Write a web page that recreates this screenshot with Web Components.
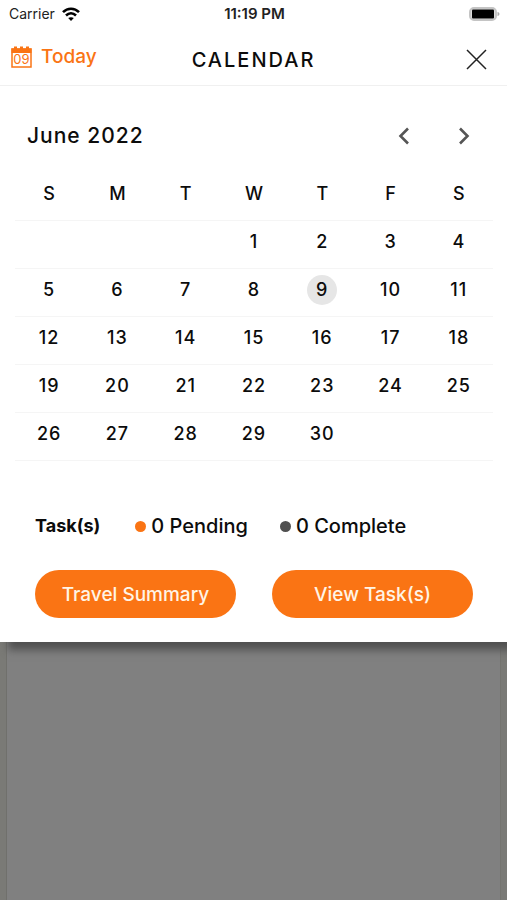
<!DOCTYPE html>
<html lang="en">
<head>
<meta charset="utf-8">
<meta name="viewport" content="width=device-width, initial-scale=1">
<title>Calendar</title>
<style>
  html, body { margin: 0; min-height: 100%; }
  body {
    --accent: #fa7414;
    --ink: #0c0c0c;
    --rule: #f5f5f5;
    font-family: Inter, "Liberation Sans", sans-serif;
    font-size: 19px;
    color: var(--ink);
    background: #808080;
  }
</style>
</head>
<body>
<calendar-app></calendar-app>
<script>
const define = (name, html, setup) => {
  const template = document.createElement('template');
  template.innerHTML = html;
  customElements.define(name, class extends HTMLElement {
    constructor() {
      super();
      this.attachShadow({ mode: 'open' }).append(template.content.cloneNode(true));
    }
    connectedCallback() {
      if (setup) setup(this, this.shadowRoot);
    }
  });
};

define('status-bar', `
  <style>
    :host { display: grid; grid-template-columns: 1fr auto 1fr; align-items: center; height: 28px; padding: 0 7px 0 9px; font: 400 14px/20px Inter, sans-serif; }
    .carrier { display: flex; align-items: center; gap: 7px; color: #222; }
    .time { font-size: 15px; font-weight: 600; color: #222; }
    .battery { justify-self: end; }
    svg { display: block; }
  </style>
  <span class="carrier"><span>Carrier</span>
    <svg width="18" height="14" viewBox="0 0 18 14" fill="none" stroke="#000" stroke-width="2.6" aria-hidden="true">
      <path d="M1 5.2C5.5 .6 12.5 .6 17 5.2"/><path d="M4 8.5c3-2.9 7-2.9 10 0"/><path d="M9 14 6.2 11.1c1.6-1.3 4-1.3 5.6 0z" fill="#000" stroke="none"/>
    </svg>
  </span>
  <span class="time">11:19 PM</span>
  <svg class="battery" width="31" height="15" viewBox="0 0 31 15" aria-hidden="true">
    <rect x="1" y="1" width="26" height="12" rx="4" fill="#ddd" stroke="#c4c4c4" stroke-width="2"/>
    <rect x="3" y="2.500" width="22" height="9" rx="1" fill="#000"/>
    <path d="M28.500 5c2.600.6 2.600 3.400 0 4z" fill="#aaa"/>
  </svg>
`);

define('sheet-header', `
  <style>
    :host { display: grid; grid-template-columns: 1fr auto 1fr; align-items: center; height: 57px; padding: 0 10px; border-bottom: 1px solid #f0f0f0; }
    button { display: flex; align-items: center; border: 0; padding: 0; background: none; font: inherit; cursor: pointer; }
    .today { gap: 8px; color: var(--accent); font-weight: 500; line-height: 24px; justify-self: start; }
    h1 { margin: 6px 0 0; font-size: 20px; line-height: 24px; font-weight: 500; letter-spacing: 2px; }
    .close { justify-self: end; margin: 6px 10px 0 0; }
  </style>
  <button class="today" type="button">
    <svg width="23" height="24" viewBox="0 0 23 24" aria-hidden="true">
      <rect x="2" y="4" width="19" height="18" fill="#fff" stroke="#fa7414" stroke-width="1.5"/>
      <path d="M1.5 3.5h20V8h-20zM4 1.5h3v3H4zM10 1.5h3v3h-3zM16 1.5h3v3h-3z" fill="#fa7414"/>
      <text x="11.5" y="19" text-anchor="middle" font-size="13" font-weight="400" font-family="Inter, sans-serif" fill="#fa7414">09</text>
    </svg>
    <span>Today</span>
  </button>
  <h1><slot></slot></h1>
  <button class="close" type="button" aria-label="Close">
    <svg width="21" height="21" viewBox="0 0 21 21" fill="none" stroke="#222" stroke-width="1.5" aria-hidden="true"><path d="M1 1l19 19M20 1 1 20"/></svg>
  </button>
`);

define('month-nav', `
  <style>
    :host { display: flex; align-items: center; justify-content: space-between; height: 32px; padding: 34px 31px 21px 27px; }
    h2 { margin: 0; font-size: 21px; line-height: 32px; font-weight: 500; letter-spacing: 1px; }
    nav { display: flex; gap: 36px; }
    button { display: grid; place-items: center; width: 24px; height: 32px; border: 0; padding: 0; background: none; cursor: pointer; }
  </style>
  <h2><slot></slot></h2>
  <nav aria-label="Month">
    <button type="button" aria-label="Previous month"><svg width="12" height="18" viewBox="0 0 12 18" fill="none" stroke="#555" stroke-width="2.6"><path d="M10 1.5 2.5 9l7.5 7.5"/></svg></button>
    <button type="button" aria-label="Next month"><svg width="12" height="18" viewBox="0 0 12 18" fill="none" stroke="#555" stroke-width="2.6"><path d="M2 1.5 9.5 9 2 16.5"/></svg></button>
  </nav>
`);

define('month-grid', `
  <style>
    :host { display: block; padding: 0 14px 0 15px; }
    table { width: 100%; table-layout: fixed; border-collapse: collapse; }
    th, td { padding: 6px 0 11px; border-bottom: 1px solid var(--rule); font-size: 18px; line-height: 30px; font-weight: 500; text-align: center; }
    td { letter-spacing: 1px; }
    button { display: block; min-width: 30px; height: 30px; margin: 0 auto; border: 0; border-radius: 15px; padding: 0; background: none; color: inherit; font: inherit; letter-spacing: inherit; cursor: pointer; }
    button[aria-current] { background: #e6e6e6; }
  </style>
  <table><thead><tr></tr></thead><tbody></tbody></table>
`, (host, root) => {
  const head = root.querySelector('thead tr');
  const body = root.querySelector('tbody');
  if (body.rows.length) return;
  for (const name of 'SMTWTFS') {
    const th = document.createElement('th');
    th.scope = 'col';
    th.textContent = name;
    head.append(th);
  }
  const start = Number(host.getAttribute('start'));
  const days = Number(host.getAttribute('days'));
  const today = Number(host.getAttribute('today'));
  for (let first = 1 - start; first <= days; first += 7) {
    const row = body.insertRow();
    for (let day = first; day < first + 7; day++) {
      const cell = row.insertCell();
      if (day < 1 || day > days) continue;
      const button = document.createElement('button');
      button.type = 'button';
      button.textContent = day;
      if (day === today) button.setAttribute('aria-current', 'date');
      cell.append(button);
    }
  }
});

define('task-count', `
  <style>
    :host { display: flex; align-items: center; gap: 5px; }
    i { width: 11px; height: 11px; border-radius: 50%; background: var(--dot); }
  </style>
  <i></i><span><slot></slot></span>
`);

define('task-summary', `
  <style>
    :host { display: flex; align-items: center; padding: 52px 34px 0 35px; line-height: 26px; font-weight: 500; }
    strong { font-weight: 700; font-size: 18px; margin-right: 35px; }
    .counts { display: flex; gap: 32px; font-size: 20px; }
    .pending { --dot: var(--accent); }
    .complete { --dot: #505050; }
  </style>
  <strong>Task(s)</strong>
  <div class="counts">
    <task-count class="pending">0 Pending</task-count>
    <task-count class="complete">0 Complete</task-count>
  </div>
`);

define('pill-button', `
  <style>
    :host { display: block; flex: 1; }
    button { display: block; width: 100%; height: 48px; border: 0; border-radius: 24px; padding: 0; background: var(--accent); color: #fff4e6; font: inherit; font-weight: 500; cursor: pointer; }
  </style>
  <button type="button"><slot></slot></button>
`);

define('calendar-app', `
  <style>
    :host { display: flex; flex-direction: column; min-height: 100vh; }
    main { background: #fff; z-index: 1; box-shadow: 8px 8px 8px #505050; }
    .actions { display: flex; gap: 36px; padding: 31px 34px 24px 35px; }
    .page { flex: 1; box-sizing: border-box; border: solid #7a7a76; border-width: 0 6px 0 6px; background: #808080; box-shadow: inset 1px 0 #70706c, inset -1px 0 #74746f; }
  </style>
  <main>
    <status-bar></status-bar>
    <sheet-header>CALENDAR</sheet-header>
    <month-nav>June 2022</month-nav>
    <month-grid start="3" days="30" today="9"></month-grid>
    <task-summary></task-summary>
    <div class="actions">
      <pill-button>Travel Summary</pill-button>
      <pill-button>View Task(s)</pill-button>
    </div>
  </main>
  <div class="page"></div>
`);
</script>
</body>
</html>
